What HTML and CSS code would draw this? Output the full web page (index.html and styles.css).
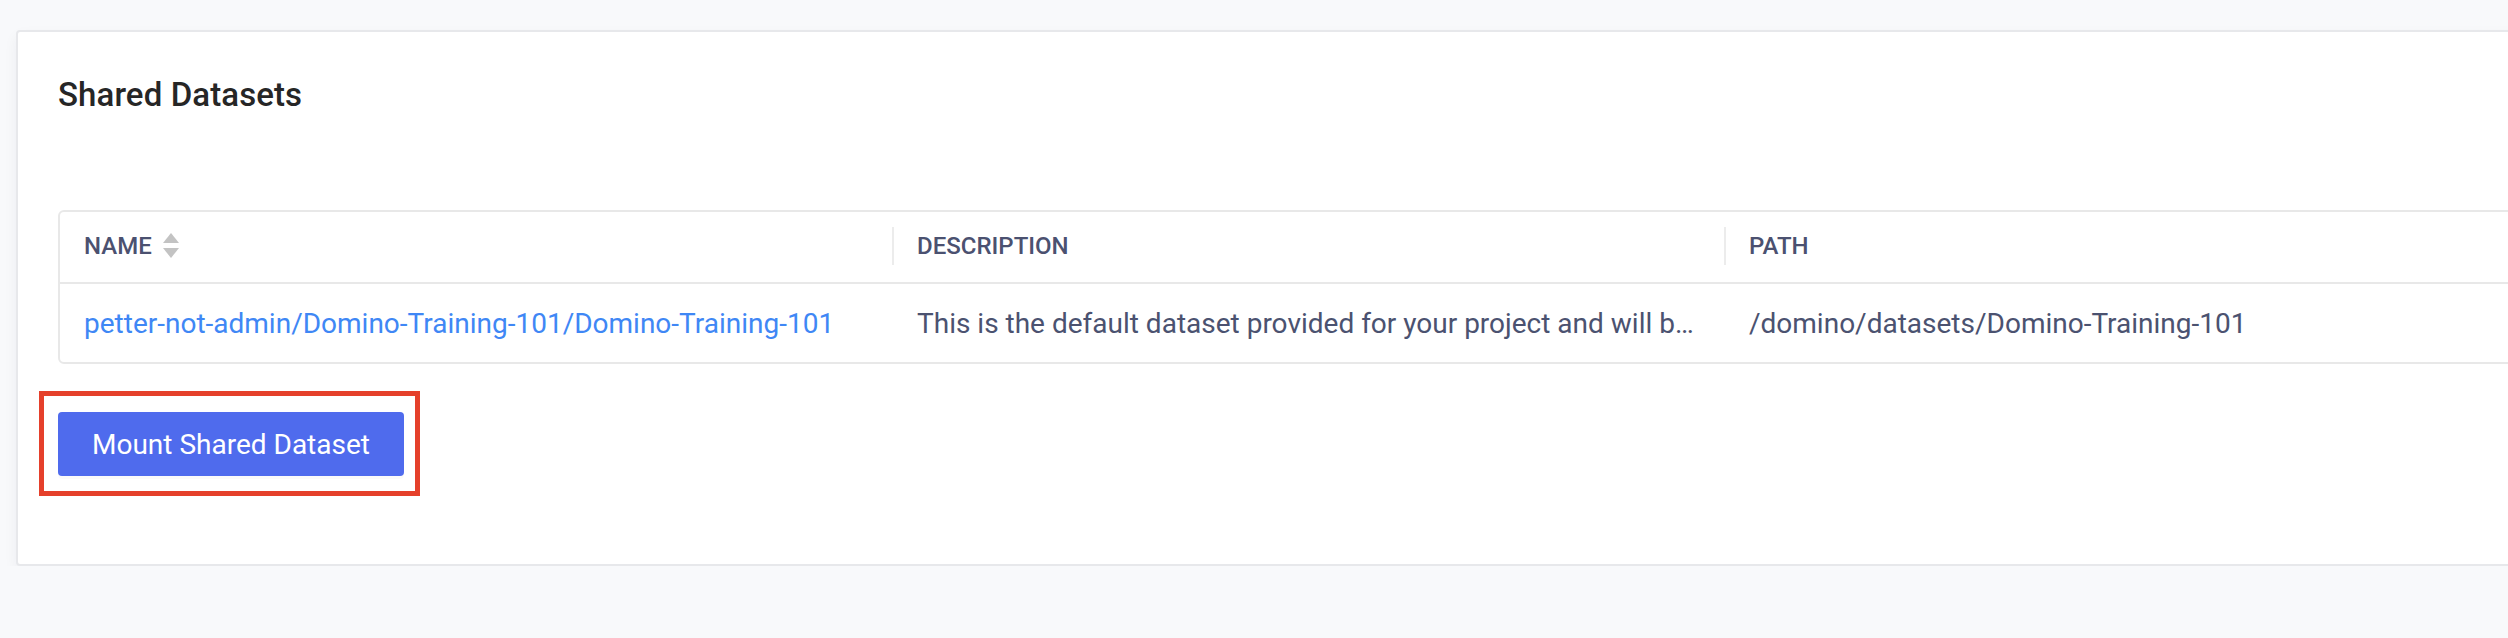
FILE: index.html
```html
<!DOCTYPE html>
<html lang="en">
<head>
<meta charset="utf-8">
<title>Shared Datasets</title>
<link rel="stylesheet" href="styles.css">
</head>
<body>
<div class="page">
  <section class="card">
    <h2 class="card-title">Shared Datasets</h2>
    <div class="table">
      <div class="thead">
        <div class="th th-first">
          <span class="th-label">Name</span>
          <svg class="sort" width="16" height="26" viewBox="0 0 16 26" aria-hidden="true">
            <path d="M8 0 L16 10 L0 10 Z" fill="#c3c3c3"/>
            <path d="M0 15 L16 15 L8 25 Z" fill="#c3c3c3"/>
          </svg>
        </div>
        <div class="th"><span class="th-label">Description</span></div>
        <div class="th"><span class="th-label">Path</span></div>
      </div>
      <div class="tr">
        <div class="td td-first"><a class="link" href="#">petter-not-admin/Domino-Training-101/Domino-Training-101</a></div>
        <div class="td td-mid"><span class="trunc">This is the default dataset provided for your project and will be mounted automatically</span></div>
        <div class="td td-last">/domino/datasets/Domino-Training-101</div>
      </div>
    </div>
    <div class="actions">
      <div class="highlight-wrap">
        <button class="btn-primary" type="button">Mount Shared Dataset</button>
        <span class="highlight" aria-hidden="true"></span>
      </div>
    </div>
  </section>
</div>
</body>
</html>
```

FILE: styles.css
```css
* { box-sizing: border-box; }

html, body {
  margin: 0;
  padding: 0;
  background: #f8f9fb;
  overflow: hidden;
  font-family: Roboto, "Liberation Sans", Arial, sans-serif;
}

.page {
  padding: 30px 0 0 16px;
  width: 2700px;
}

.card {
  width: 2640px;
  height: 536px;
  background: #ffffff;
  border: 2px solid #e7e8eb;
  border-radius: 4px;
  box-shadow: 0 6px 14px rgba(20, 30, 60, 0.05);
  padding: 41px 0 0 40px;
}

.card-title {
  margin: 0;
  font-size: 33px;
  line-height: 44px;
  font-weight: 500;
  color: #262626;
  letter-spacing: 0.1px;
}

.table {
  margin-top: 93px;
  width: 2500px;
  border: 2px solid #e8e8e8;
  border-radius: 6px;
}

.thead,
.tr {
  display: grid;
  grid-template-columns: 832px 832px 1fr;
}

.thead {
  height: 72px;
  padding-bottom: 2px;
  border-bottom: 2px solid #e8e8e8;
}

.th {
  display: flex;
  align-items: center;
  font-size: 24px;
  font-weight: 500;
  color: #4b5170;
  text-transform: uppercase;
}

.th::before {
  content: "";
  width: 2px;
  height: 38px;
  background: #ececec;
  margin-right: 23px;
}

.th-first::before {
  display: none;
}

.th-first {
  padding-left: 24px;
}

.sort {
  margin-left: 11px;
  display: block;
}

.tr {
  height: 78px;
  align-items: center;
}

.td {
  font-size: 28px;
  color: #4b5270;
  white-space: nowrap;
  overflow: hidden;
  min-width: 0;
}

.td-first {
  padding-left: 24px;
}

.td-mid {
  padding-left: 25px;
  padding-right: 24px;
}

.td-last {
  padding-left: 25px;
}

.trunc {
  display: block;
  overflow: hidden;
  text-overflow: ellipsis;
  white-space: nowrap;
}

.link {
  color: #3f87f5;
  text-decoration: none;
}

.actions {
  margin-top: 48px;
  display: flex;
}

.highlight-wrap {
  position: relative;
  display: inline-flex;
}

.btn-primary {
  height: 64px;
  padding: 0 34px;
  border: none;
  border-radius: 4px;
  background: #4f6bed;
  color: #ffffff;
  font-family: Roboto, "Liberation Sans", Arial, sans-serif;
  font-size: 28px;
  font-weight: 400;
  box-shadow: 0 3px 0 rgba(0, 0, 0, 0.02);
  cursor: pointer;
}

.highlight {
  position: absolute;
  left: -19px;
  top: -21px;
  width: 381px;
  height: 105px;
  border: 5px solid #e5402b;
  pointer-events: none;
}
```
